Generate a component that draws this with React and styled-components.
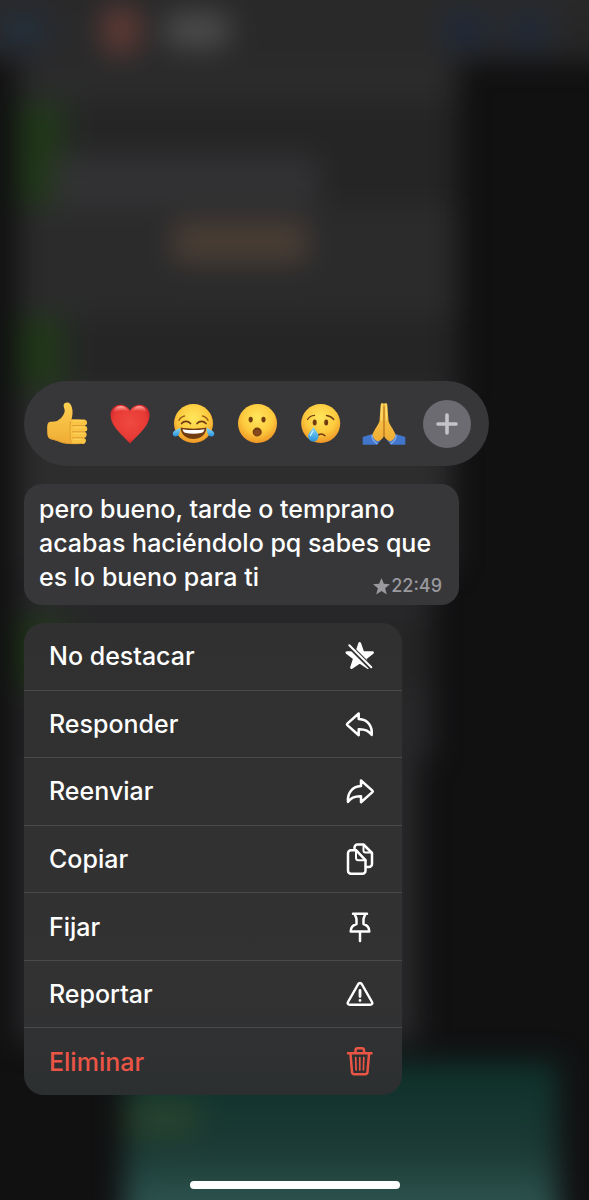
import React from "react";
import styled, { createGlobalStyle } from "styled-components";

const GlobalStyle = createGlobalStyle`
  * {
    box-sizing: border-box;
  }
  body {
    margin: 0;
    background-color: #111112;
    font-family: Inter, "Noto Sans", sans-serif;
    font-weight: 500;
    color: #ffffff;
  }
  button {
    font: inherit;
    border: none;
    background: none;
    padding: 0;
    cursor: pointer;
  }
`;

const Screen = styled.div`
  position: relative;
  min-height: 100vh;
  overflow: hidden;
  display: flex;
  flex-direction: column;
`;

/* dimmed chat behind the menu */
const Backdrop = styled.div`
  position: absolute;
  inset: -40px;
  padding: 40px;
  filter: blur(14px);
`;
const ChatHeader = styled.div`
  display: flex;
  align-items: center;
  gap: 24px;
  height: 60px;
  margin: -40px -40px 0;
  padding: 40px 40px 0;
  box-sizing: content-box;
  background-color: #29292a;
`;
const Blob = styled.div`
  width: ${(props) => props.$width}px;
  height: ${(props) => props.$height}px;
  border-radius: 12px;
  background-color: ${(props) => props.$color};
`;
const BlobSpace = styled.div`
  flex: 1;
`;
const Received = styled.div`
  display: flex;
  flex-direction: column;
  width: ${(props) => props.$width}px;
  height: ${(props) => props.$height}px;
  margin-left: 18px;
  background-color: ${(props) => props.$color};
`;
const Quote = styled.div`
  flex: none;
  display: flex;
  align-items: flex-end;
  width: 100%;
  height: ${(props) => props.$height}px;
  margin-top: ${(props) => props.$top}px;
  background: linear-gradient(90deg, #21381a 34px, #252526 60px);
`;
const QuoteText = styled.div`
  flex: 1;
  height: 50px;
  margin: 0 140px 0 36px;
  background-color: #323234;
`;
const Highlight = styled.div`
  width: 134px;
  height: 40px;
  margin: 16px 0 0 155px;
  background-color: #4b3e34;
`;
const Sent = styled.div`
  width: 434px;
  height: 200px;
  margin: 20px 0 0 124px;
  padding-top: 36px;
  background: linear-gradient(#0e312a, #1c3a35 45%, #2f5752 75%);
`;

const Content = styled.main`
  position: relative;
  flex: 1;
  display: flex;
  flex-direction: column;
  align-items: flex-start;
  justify-content: flex-end;
  gap: 18px;
  padding: 24px 24px 105px;
`;

const Reactions = styled.div`
  display: flex;
  align-items: center;
  gap: 17px;
  width: 465px;
  max-width: 100%;
  height: 85px;
  padding: 0 18px 0 22px;
  border-radius: 43px;
  background-color: #373739;
`;
const EmojiList = styled.div`
  flex: 1;
  display: flex;
  justify-content: space-between;
`;
const EmojiButton = styled.button`
  width: 44px;
  height: 44px;
  svg {
    display: block;
  }
`;
const MoreButton = styled.button`
  display: flex;
  align-items: center;
  justify-content: center;
  width: 48px;
  height: 48px;
  border-radius: 50%;
  background-color: #6c6b72;
`;

const Message = styled.article`
  width: 435px;
  max-width: 100%;
  min-height: 120px;
  padding: 8px 17px 10px 15px;
  border-radius: 18px;
  background-color: #373739;
`;
const MessageText = styled.p`
  margin: 0;
  font-size: 25px;
  line-height: 34px;
`;
const Meta = styled.span`
  float: right;
  display: flex;
  align-items: center;
  gap: 1px;
  margin-top: 17px;
  font-size: 18px;
  line-height: 18px;
  color: #99999e;
`;

const Menu = styled.div`
  display: flex;
  flex-direction: column;
  width: 378px;
  max-width: 100%;
  height: 472px;
  border-radius: 20px;
  overflow: hidden;
  background: linear-gradient(#303030, #323233 80%, #2c2f30);
`;
const MenuItem = styled.button`
  flex: 1;
  display: flex;
  align-items: center;
  justify-content: space-between;
  padding: 0 26px 0 25px;
  font-size: 25px;
  line-height: 32px;
  text-align: left;
  color: ${(props) => (props.$danger ? "#eb5545" : "#ffffff")};
  & + & {
    border-top: 1px solid #4a4a4b;
  }
`;

const HomeBar = styled.div`
  position: absolute;
  bottom: 11px;
  left: 50%;
  width: 210px;
  height: 8px;
  margin-left: -105px;
  border-radius: 4px;
  background-color: #ffffff;
`;

const Emoji = ({ children }) => (
  <svg width="44" height="44" viewBox="0 0 44 44" fill="none" strokeLinecap="round" strokeLinejoin="round">
    <defs>
      <radialGradient id="face" cx="0.5" cy="0.35" r="0.65">
        <stop offset="0" stopColor="#ffe65c" />
        <stop offset="0.6" stopColor="#fdca3e" />
        <stop offset="1" stopColor="#ee9626" />
      </radialGradient>
      <linearGradient id="skin" x1="0" y1="0" x2="0" y2="1">
        <stop offset="0" stopColor="#fdd050" />
        <stop offset="1" stopColor="#efac35" />
      </linearGradient>
      <radialGradient id="heart" cx="0.5" cy="0.45" r="0.6">
        <stop offset="0" stopColor="#ef4a40" />
        <stop offset="0.7" stopColor="#e83a35" />
        <stop offset="1" stopColor="#c9222a" />
      </radialGradient>
      <linearGradient id="shine" x1="0" y1="0" x2="0" y2="1">
        <stop offset="0" stopColor="#ffb4ac" />
        <stop offset="1" stopColor="#ee4a42" stopOpacity="0" />
      </linearGradient>
      <linearGradient id="tear" x1="0" y1="0" x2="0" y2="1">
        <stop offset="0" stopColor="#8fdcf9" />
        <stop offset="1" stopColor="#2793dc" />
      </linearGradient>
    </defs>
    {children}
  </svg>
);

const ThumbsUp = () => (
  <Emoji>
    <path d="M21.500.5c-2.800 0-4.300 1.600-3.800 4 .5 2 1.500 3.200.8 5.700-1 3.500-4.500 7.800-8.500 9.100-2.500.7-5.500 0-7.500 1.200C1 22 1.200 25 1.200 28c0 3.500 0 7 2 8.500 1.800 1.300 4.800 1.300 7.800 2.500 4 1.700 8 3 13 3h10l4-20-3-4.300-9.500-.2c1-4 1.600-8 .4-12C24.800 2.300 23.500.5 21.500.5z" fill="url(#skin)" />
    <path d="M26 17.500h11.500a3 3 0 0 1 1 6 3.200 3.200 0 0 1 .3 6.300 3.200 3.200 0 0 1-1 6.100 3 3 0 0 1-2 5.900H26c-2.500-5-3.500-19 0-24.300z" fill="#f9c444" />
    <path d="M24.500 20c-.8 5-.8 15 .5 20M26.500 23.600H38M26.500 29.800h12M26.500 35.800H37" stroke="#dc9630" strokeWidth=".9" />
    <path d="M27 18.900h10M28 25.200h9M28 31.400h9M28 37.300h7" stroke="#ffd660" strokeWidth="1" />
    <path d="M3 35.500c4 2.500 9 2.500 13 4.500 6 2 13 2 19 1.500" stroke="#dc9a30" strokeWidth=".7" />
  </Emoji>
);

const Heart = () => (
  <Emoji>
    <path d="M21 41.400C14 33.500 1.500 24.500 1.500 13 1.500 7 6 2.700 11.300 2.700 15.500 2.700 19 5 21 8.800 23 5 26.500 2.700 30.700 2.700 36 2.700 40.600 7 40.600 13c0 11.500-12.600 20.500-19.600 28.400z" fill="url(#heart)" />
    <path d="M4 11.500C4.500 7 7.500 4 11.300 4c3.800 0 6.700 2 8.200 5.500-4-2-11-2-15.500 2zM38 11.500C37.500 7 34.500 4 30.700 4c-3.800 0-6.700 2-8.200 5.500 4-2 11-2 15.500 2z" fill="url(#shine)" />
  </Emoji>
);

const Joy = () => (
  <Emoji>
    <circle cx="21.500" cy="21.500" r="19.500" fill="url(#face)" />
    <path d="M7 18.500c1-2.500 3-4 5.500-4.500M36 18.500c-1-2.500-3-4-5.500-4.500" stroke="#9c6218" strokeWidth="1.400" />
    <path d="M9.500 21.500c2.500-2.800 6.500-2.800 9 0M25 21.500c2.500-2.800 6.500-2.800 9 0" stroke="#713c12" strokeWidth="1.700" />
    <path d="M8.500 25.500c8 1.500 18 1.500 26 0C34 33 28.500 37 21.500 37S9 33 8.500 25.500z" fill="#713c12" />
    <path d="M10.500 27.200c7 1.200 15 1.200 22 0-.4 2-1.200 3-2.500 3.500-5.500 1.400-11.500 1.400-17 0-1.300-.5-2.100-1.500-2.500-3.500z" fill="#ffffff" />
    <path d="M8.500 25.500C8 31 7 34.500 3.500 34.500 1.500 34.500.5 33 .8 31.200 1.300 28.200 5.500 28 8.500 25.500zM34.500 25.500C35 31 36 34.500 39.500 34.500c2 0 3-1.500 2.700-3.300-.5-3-4.700-3.200-7.700-5.700z" fill="url(#tear)" />
  </Emoji>
);

const Surprised = () => (
  <Emoji>
    <circle cx="21.500" cy="21.500" r="19.500" fill="url(#face)" />
    <ellipse cx="14.700" cy="17.600" rx="2.100" ry="2.800" fill="#713c12" />
    <ellipse cx="27.500" cy="17.600" rx="2.100" ry="2.800" fill="#713c12" />
    <ellipse cx="21.200" cy="30" rx="4.600" ry="4.400" fill="#713c12" />
    <ellipse cx="21.200" cy="30.800" rx="3.400" ry="3" fill="#87481c" />
  </Emoji>
);

const Crying = () => (
  <Emoji>
    <circle cx="21.700" cy="21.500" r="19.500" fill="url(#face)" />
    <path d="M8.500 17.500c1.500-2.500 4-4 7-4.200M27.500 13.500c3 .3 5.500 1.800 7.300 4" stroke="#713c12" strokeWidth="1.300" />
    <ellipse cx="15.700" cy="20.500" rx="2" ry="2.900" fill="#713c12" />
    <ellipse cx="27.200" cy="20.500" rx="2" ry="2.900" fill="#713c12" />
    <path d="M18.500 33.800c2-2.200 5-2.400 7.500 0" stroke="#713c12" strokeWidth="1.500" />
    <path d="M14.500 24.700c1.500 3.500 5 6 5 9.500a5.200 5.200 0 0 1-10.400 0c0-3.500 4-6 5.400-9.500z" fill="url(#tear)" />
    <path d="M11.500 33.500c.5-2 1.800-3 2.500-4.500" stroke="#d5f3ff" strokeWidth="1.200" />
  </Emoji>
);

const Praying = () => (
  <Emoji>
    <path d="M11 32C7 33 3.500 34 .7 35v7.800H15l4-4.800zM33 32c4 1 7.500 2 10.300 3v7.800H29L25 38z" fill="#4176cc" />
    <path d="M10 33.500c0 3 1.500 6 5 8M34 33.500c0 3-1.500 6-5 8" stroke="#7aa4e5" strokeWidth="1.600" />
    <path d="M20.500 1c-1.200 0-1.700.8-1.800 2L17.500 19c-1 4-5 8-7 13.500.5 3.500 2.500 6 5.500 7 3-1.500 5.500-3.500 6-6l1.500-17L22 3c-.1-1.200-.5-2-1.500-2z" fill="url(#skin)" />
    <path d="M23.500 1c1.200 0 1.700.8 1.800 2L26.500 19c1 4 5 8 7 13.500-.5 3.500-2.500 6-5.500 7-3-1.500-5.500-3.500-6-6V3c.1-1.200.5-2 1.500-2z" fill="url(#skin)" />
    <path d="M22 4v29.500" stroke="#b66d19" strokeWidth="1.200" />
    <path d="M19.800 4v14M24.300 4v14" stroke="#ffe17b" strokeWidth="1" />
  </Emoji>
);

const Icon = ({ children }) => (
  <svg width="32" height="32" viewBox="0 0 32 32" fill="none" stroke="currentColor" strokeWidth="2.500" strokeLinecap="round" strokeLinejoin="round" aria-hidden="true">
    {children}
  </svg>
);

const UnstarIcon = () => (
  <Icon>
    <path d="M15.700 3.500l3.100 9 9.700.2-7.500 5.800 3 9.100-8.300-5.400-8.200 5.400 3-9.100-7.600-5.800 9.800-.2z" fill="currentColor" strokeWidth="2.800" />
    <path d="M3.500 4l26 26" stroke="#303030" strokeWidth="4.800" strokeLinecap="butt" />
    <path d="M5.300 5.300l22 22" strokeWidth="2" />
  </Icon>
);
const ReplyIcon = () => (
  <Icon>
    <path d="M14.700 5.500L3.300 15.600c-.5.500-.5 1 0 1.500L14.700 27.200v-6c6-.3 9.800 1 13 5.700.8-8-3-15.300-13-15.800z" />
  </Icon>
);
const ForwardIcon = () => (
  <Icon>
    <path d="M17 5.500L28.400 15.600c.5.500.5 1 0 1.500L17 27.200v-6C11 21 7 22.300 4 26.900c-.8-8 3.500-15.300 13-15.800z" />
  </Icon>
);
const CopyIcon = () => (
  <Icon>
    <path d="M12 7.200H7A3 3 0 0 0 4 10.200v17.500a3 3 0 0 0 3 3h11.500a3 3 0 0 0 3-3V17.200z" />
    <path d="M12 7.200v7.500a2.500 2.500 0 0 0 2.500 2.500h7" strokeWidth="2" />
    <path d="M10.500 6V4.500a3 3 0 0 1 3-3H19.500l8.500 8.500V21a3 3 0 0 1-3 3h-3" />
    <path d="M19.500 2v5.500a2 2 0 0 0 2 2h6" strokeWidth="2" />
  </Icon>
);
const PinIcon = () => (
  <Icon>
    <path d="M9 2.700h14M11 3.500c0 2 1.500 2.500 1.500 5V13C9 14 6.700 16.500 6.700 20.500h18.600C25.300 16.500 23 14 19.500 13V8.500c0-2.500 1.500-3 1.500-5M16 21v9" />
  </Icon>
);
const WarningIcon = () => (
  <Icon>
    <path d="M14.300 6a2 2 0 0 1 3.400 0L28 24c.8 1.500 0 2.700-1.700 2.700H5.700C4 26.700 3.200 25.500 4 24z" />
    <path d="M16 12.500v6M16 22.300v.2" strokeWidth="2.800" />
  </Icon>
);
const TrashIcon = () => (
  <Icon>
    <path d="M4 7.300h23.500M11.500 7V4.500C11.500 3 12 2.300 13.500 2.300h4.500c1.500 0 2 .7 2 2.200V7M6.500 8l1.500 18c.1 1.500 1 2.300 2.400 2.300h10.700c1.400 0 2.300-.8 2.400-2.300L25 8" />
    <path d="M11.700 11.500l.4 12.500M15.800 11.500v12.500M19.800 11.500l-.4 12.500" strokeWidth="1.700" />
  </Icon>
);

const reactions = [
  { name: "Me gusta", Picture: ThumbsUp },
  { name: "Me encanta", Picture: Heart },
  { name: "Me divierte", Picture: Joy },
  { name: "Me asombra", Picture: Surprised },
  { name: "Me entristece", Picture: Crying },
  { name: "Gracias", Picture: Praying },
];

const actions = [
  { label: "No destacar", Glyph: UnstarIcon },
  { label: "Responder", Glyph: ReplyIcon },
  { label: "Reenviar", Glyph: ForwardIcon },
  { label: "Copiar", Glyph: CopyIcon },
  { label: "Fijar", Glyph: PinIcon },
  { label: "Reportar", Glyph: WarningIcon },
  { label: "Eliminar", Glyph: TrashIcon, danger: true },
];

function ChatBackdrop() {
  return (
    <Backdrop aria-hidden="true">
      <ChatHeader>
        <Blob $width={46} $height={34} $color="#232f3c" />
        <Blob $width={8} $height={34} $color="#2b2b2d" />
        <Blob $width={38} $height={48} $color="#5f3a34" />
        <Blob $width={66} $height={36} $color="#4b4b4c" />
        <BlobSpace />
        <Blob $width={42} $height={36} $color="#1f293a" />
        <Blob $width={36} $height={36} $color="#1f293a" />
        <Blob $width={18} $height={34} $color="#232324" />
      </ChatHeader>
      <Received $width={440} $height={338} $color="#2b2b2c">
        <Quote $top={42} $height={104}>
          <QuoteText />
        </Quote>
        <Highlight />
        <Quote $top={54} $height={74} />
      </Received>
      <Received $width={434} $height={170} $color="#2d2d2e" />
      <Received $width={414} $height={190} $color="#28282a">
        <Quote $top={50} $height={70} />
      </Received>
      <Received $width={400} $height={284} $color="#2a2a2c" />
      <Sent>
        <Blob $width={76} $height={40} $color="#26412e" />
      </Sent>
    </Backdrop>
  );
}

function App() {
  return (
    <Screen>
      <GlobalStyle />
      <ChatBackdrop />
      <Content>
        <Reactions>
          <EmojiList>
            {reactions.map(({ name, Picture }) => (
              <EmojiButton key={name} aria-label={name}>
                <Picture />
              </EmojiButton>
            ))}
          </EmojiList>
          <MoreButton aria-label="Más reacciones">
            <svg width="24" height="24" viewBox="0 0 24 24" stroke="#c3c3c8" strokeWidth="3.600" strokeLinecap="round">
              <path d="M12 3v18M3 12h18" />
            </svg>
          </MoreButton>
        </Reactions>
        <Message>
          <MessageText>
            pero bueno, tarde o temprano acabas haciéndolo pq sabes que es lo bueno para ti
            <Meta>
              <svg width="17" height="17" viewBox="0 0 16 16" fill="currentColor" aria-hidden="true">
                <path d="M8 0l2.200 5.500 5.800.3-4.600 3.800 1.600 5.900L8 12.200l-5 3.300 1.600-5.900L0 5.800l5.800-.3z" />
              </svg>
              <time>22:49</time>
            </Meta>
          </MessageText>
        </Message>
        <Menu role="menu">
          {actions.map(({ label, Glyph, danger }) => (
            <MenuItem key={label} role="menuitem" $danger={danger}>
              {label}
              <Glyph />
            </MenuItem>
          ))}
        </Menu>
      </Content>
      <HomeBar />
    </Screen>
  );
}

export default App;
